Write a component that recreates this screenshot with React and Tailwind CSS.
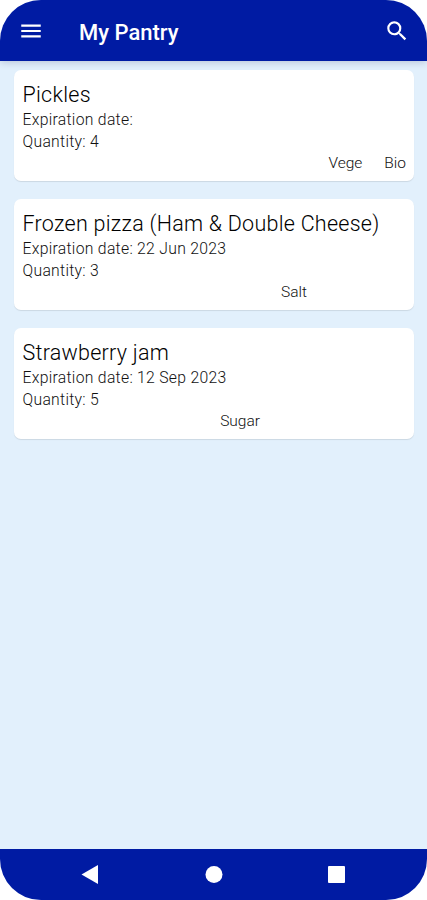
import { MdMenu, MdSearch } from 'react-icons/md';

const items = [
  { name: 'Pickles', date: '', quantity: 4, tags: ['Vege', 'Bio'], tagClass: 'pr-2' },
  {
    name: 'Frozen pizza (Ham & Double Cheese)',
    date: '22 Jun 2023',
    quantity: 3,
    tags: ['Salt'],
    tagClass: 'pr-[107px]',
  },
  { name: 'Strawberry jam', date: '12 Sep 2023', quantity: 5, tags: ['Sugar'], tagClass: 'pr-[154px]' },
];

function PantryCard({ item }) {
  return (
    <div className="h-[111px] rounded-[7px] bg-white pl-[8.5px] pt-3 font-light shadow-[0_1px_1px_rgba(0,0,0,0.1)]">
      <h2 className="text-[21.5px] leading-[26px] tracking-[0.26px] whitespace-nowrap text-black">{item.name}</h2>
      <div className="pt-px text-[15.75px] leading-[22px] tracking-[0.28px]">
        <p>Expiration date: {item.date}</p>
        <p>Quantity: {item.quantity}</p>
      </div>
      <div className={`flex justify-end gap-[22px] text-[15.5px] leading-[20px] ${item.tagClass}`}>
        {item.tags.map((tag) => (
          <span key={tag}>{tag}</span>
        ))}
      </div>
    </div>
  );
}

function App() {
  return (
    <div className="h-[900px] w-[427px] bg-white font-['Roboto',sans-serif]">
      <div className="flex h-full flex-col overflow-hidden rounded-[41px] bg-[#e2f0fc] text-[#111]">
        <header className="flex h-[61px] items-center bg-[#001ba3] pl-[18px] pr-[17px] text-white shadow-[0_1px_8px_rgba(0,0,60,0.2)]">
          <MdMenu size={26} />
          <h1 className="ml-[35px] flex-1 pt-[3px] text-[22px] font-medium">My Pantry</h1>
          <MdSearch size={26} />
        </header>
        <main className="flex flex-1 flex-col gap-[17.8px] pl-[14px] pr-[13px] pt-[9px]">
          {items.map((item) => (
            <PantryCard key={item.name} item={item} />
          ))}
        </main>
        <nav className="flex h-[51px] items-center bg-[#001ba3]">
          <svg viewBox="0 0 427 51" className="h-full w-full fill-white">
            <path d="M81.5 25.5 98 16v19z" />
            <circle cx="214" cy="25.5" r="8.5" />
            <rect x="328" y="17" width="17" height="17" rx="1" />
          </svg>
        </nav>
      </div>
    </div>
  );
}

export default App;
